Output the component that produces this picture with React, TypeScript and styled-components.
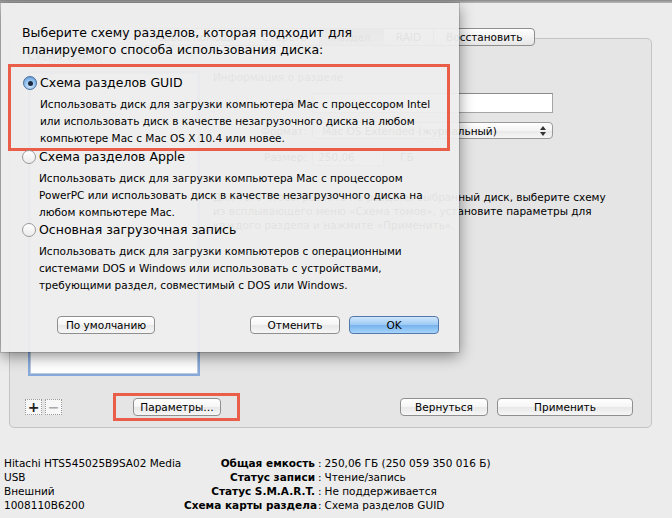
import React from "react";
import styled, { createGlobalStyle, css } from "styled-components";

const UI = `"DejaVu Sans", "Liberation Sans", sans-serif`;

const GlobalStyle = createGlobalStyle`
  * { box-sizing: border-box; }
  html, body { margin: 0; padding: 0; background: #ececec; }
  body { font-family: ${UI}; color: #000; }
`;

const Window = styled.div`
  position: relative;
  width: 672px;
  height: 518px;
  overflow: hidden;
  background: #ececec;
  font-size: 10.5px;
`;

const TitleEdge = styled.div`
  height: 3px;
  background: linear-gradient(#8a8a8a, #b8b8b8);
`;

const Body = styled.div`
  display: flex;
  flex-direction: column;
  padding-top: 25px;
`;

const Tabs = styled.div`
  position: relative;
  z-index: 1;
  display: flex;
  align-self: center;
  height: 18px;
  border: 1px solid #8e8e8e;
  border-radius: 4px;
  overflow: hidden;
  background: linear-gradient(#ffffff, #e6e6e6);
`;

const Tab = styled.div<{ $active?: boolean }>`
  display: flex;
  align-items: center;
  padding: 0 12px;
  white-space: nowrap;
  & + & {
    border-left: 1px solid #a0a0a0;
  }
  ${(p) =>
    p.$active &&
    css`
      background: linear-gradient(#9a9a9a, #bdbdbd);
    `}
`;

const Panel = styled.div`
  display: flex;
  flex-direction: column;
  height: 390px;
  margin: -8px 20px 0 9px;
  padding: 0 18px 7px 15px;
  border: 1px solid #c4c4c4;
  border-radius: 5px;
  background: #e5e5e5;
`;

const TopArea = styled.div`
  flex: 1;
  display: flex;
  min-height: 0;
`;

const LeftCol = styled.div`
  width: 178px;
  display: flex;
  flex-direction: column;
  padding: 10px 0 17px 3px;
`;

const SmallLabel = styled.div`
  line-height: 14px;
`;

const SchemeBox = styled.div`
  flex: 1;
  width: 172px;
  margin-top: 8px;
  background: #fff;
  border: 2px solid #86a9d9;
  box-shadow: inset 0 0 0 1px #b9c9e0;
`;

const RightCol = styled.div`
  flex: 1;
  margin-left: 10px;
  padding-top: 31px;
`;

const Heading = styled.div`
  line-height: 14px;
  color: #222;
`;

const FormGrid = styled.div`
  display: grid;
  grid-template-columns: 94px 241px;
  column-gap: 5px;
  row-gap: 9px;
  margin-top: 9px;
  align-items: center;
`;

const FieldLabel = styled.div`
  text-align: right;
`;

const TextField = styled.div<{ $w?: number; $h?: number }>`
  width: ${(p) => (p.$w ? `${p.$w}px` : "100%")};
  height: ${(p) => p.$h ?? 20}px;
  display: flex;
  align-items: center;
  padding: 0 5px;
  background: #fff;
  border: 1px solid #a5a5a5;
  border-top-color: #8a8a8a;
`;

const SizeRow = styled.div`
  display: flex;
  align-items: center;
  gap: 16px;
`;

const Popup = styled.div<{ $w?: number }>`
  width: ${(p) => (p.$w ? `${p.$w}px` : "100%")};
  height: 17px;
  display: flex;
  align-items: center;
  justify-content: space-between;
  padding: 0 6px 0 9px;
  border: 1px solid #999;
  border-radius: 4px;
  background: linear-gradient(#ffffff 0%, #f4f4f4 50%, #e8e8e8 51%, #f6f6f6 100%);
  white-space: nowrap;
`;

const Paragraph = styled.p`
  margin: 24px 0 0;
  line-height: 14px;
  white-space: nowrap;
`;

const BottomBar = styled.div`
  display: flex;
  align-items: center;
  height: 27px;
`;

const SquareButton = styled.div<{ $disabled?: boolean }>`
  width: 17px;
  height: 16px;
  display: flex;
  align-items: center;
  justify-content: center;
  border: 1px dotted #9a9a9a;
  background: #f7f7f7;
  font-size: 14px;
  font-weight: bold;
  color: ${(p) => (p.$disabled ? "#a8a8a8" : "#222")};
  & + & {
    margin-left: 3px;
  }
`;

const Highlight = styled.div<{ $inset: string }>`
  border: 3px solid #ea5d48;
  padding: ${(p) => p.$inset};
`;

const ParamsWrap = styled(Highlight)`
  margin-left: 51px;
`;

const Spacer = styled.div`
  flex: 1;
`;

const Button = styled.div<{ $w: number; $primary?: boolean }>`
  width: ${(p) => p.$w}px;
  height: 18px;
  display: flex;
  align-items: center;
  justify-content: center;
  border: 1px solid #8f8f8f;
  border-radius: 4px;
  background: linear-gradient(#ffffff 0%, #f5f5f5 50%, #e8e8e8 51%, #f6f6f6 100%);
  white-space: nowrap;
  & + & {
    margin-left: 9px;
  }
  ${(p) =>
    p.$primary &&
    css`
      border-color: #5379ab;
      background: linear-gradient(#cfe6fc 0%, #9cc9f3 50%, #77b2ec 51%, #a6d4fb 100%);
    `}
`;

const Info = styled.div`
  display: grid;
  grid-template-columns: 180px 131px auto 1fr;
  margin-top: 28px;
  padding-left: 4px;
  line-height: 14px;
  white-space: nowrap;
`;

const InfoLabel = styled.div`
  font-weight: bold;
  text-align: right;
`;

const Colon = styled.div`
  padding: 0 3px;
`;

/* sheet */

const Sheet = styled.div`
  position: absolute;
  top: 3px;
  left: 1px;
  z-index: 2;
  width: 458px;
  height: 349px;
  display: flex;
  flex-direction: column;
  padding: 21px 18px 0 21px;
  background: rgba(237, 237, 237, 0.95);
  box-shadow: 0 4px 14px rgba(0, 0, 0, 0.45), 0 0 0 1px rgba(0, 0, 0, 0.15);
`;

const SheetTitle = styled.div`
  font-size: 12.5px;
  line-height: 17px;
  white-space: nowrap;
`;

const OptionFrame = styled(Highlight)`
  margin: 6px -9px 0 -14px;
`;

const Option = styled.div<{ $gap?: number }>`
  margin-top: ${(p) => p.$gap ?? 0}px;
`;

const OptionHead = styled.div`
  display: flex;
  align-items: center;
  gap: 3px;
  font-size: 12.5px;
  line-height: 16px;
`;

const Radio = styled.span<{ $checked?: boolean }>`
  flex: none;
  width: 14px;
  height: 14px;
  display: flex;
  align-items: center;
  justify-content: center;
  border-radius: 50%;
  border: 1px solid ${(p) => (p.$checked ? "#4b6f9c" : "#9a9a9a")};
  background: ${(p) =>
    p.$checked
      ? "radial-gradient(circle at 50% 70%, #d6ebfd 0%, #8dbdec 55%, #4f88cc 100%)"
      : "linear-gradient(#ffffff, #ececec)"};
  &::after {
    content: "";
    display: ${(p) => (p.$checked ? "block" : "none")};
    width: 5px;
    height: 5px;
    border-radius: 50%;
    background: #1b2a40;
  }
`;

const OptionText = styled.p`
  margin: 5px 0 0 17px;
  line-height: 17px;
  white-space: nowrap;
`;

const SheetButtons = styled.div`
  display: flex;
  margin-top: 22px;
  padding: 0 2px 0 35px;
`;

const UpDown = () => (
  <svg width="6" height="10" viewBox="0 0 6 10">
    <path d="M0 4 L3 0 L6 4 Z M0 6 L3 10 L6 6 Z" fill="#333" />
  </svg>
);

export default function App() {
  return (
    <>
      <GlobalStyle />
      <Window>
        <TitleEdge />
        <Body>
          <Tabs>
            <Tab>Первая помощь</Tab>
            <Tab>Стереть</Tab>
            <Tab $active>Раздел</Tab>
            <Tab>RAID</Tab>
            <Tab>Восстановить</Tab>
          </Tabs>
          <Panel>
            <TopArea>
              <LeftCol>
                <SmallLabel>Схема томов:</SmallLabel>
                <SchemeBox />
              </LeftCol>
              <RightCol>
                <Heading>Информация о разделе</Heading>
                <FormGrid>
                  <FieldLabel>Имя:</FieldLabel>
                  <TextField />
                  <FieldLabel>Формат:</FieldLabel>
                  <Popup>
                    Mac OS Extended (журнальный)
                    <UpDown />
                  </Popup>
                  <FieldLabel>Размер:</FieldLabel>
                  <SizeRow>
                    <TextField $w={72} $h={18}>
                      250,06
                    </TextField>
                    ГБ
                  </SizeRow>
                </FormGrid>
                <Paragraph>
                  Для того чтобы разбить на разделы выбранный диск, выберите схему
                  <br />
                  из всплывающего меню «Схема томов», установите параметры для
                  <br />
                  каждого раздела и нажмите «Применить».
                </Paragraph>
              </RightCol>
            </TopArea>
            <BottomBar>
              <SquareButton>+</SquareButton>
              <SquareButton $disabled>−</SquareButton>
              <ParamsWrap $inset="2px 16px 2px 17px">
                <Button $w={88}>Параметры…</Button>
              </ParamsWrap>
              <Spacer />
              <Button $w={88}>Вернуться</Button>
              <Button $w={136}>Применить</Button>
            </BottomBar>
          </Panel>
          <Info>
            <div>Hitachi HTS545025B9SA02 Media</div>
            <InfoLabel>Общая емкость</InfoLabel>
            <Colon>:</Colon>
            <div>250,06 ГБ (250 059 350 016 Б)</div>
            <div>USB</div>
            <InfoLabel>Статус записи</InfoLabel>
            <Colon>:</Colon>
            <div>Чтение/запись</div>
            <div>Внешний</div>
            <InfoLabel>Статус S.M.A.R.T.</InfoLabel>
            <Colon>:</Colon>
            <div>Не поддерживается</div>
            <div>1008110B6200</div>
            <InfoLabel>Схема карты раздела</InfoLabel>
            <Colon>:</Colon>
            <div>Схема разделов GUID</div>
          </Info>
        </Body>

        <Sheet>
          <SheetTitle>
            Выберите схему разделов, которая подходит для
            <br />
            планируемого способа использования диска:
          </SheetTitle>
          <OptionFrame $inset="8px 4px 1px 12px">
            <Option>
              <OptionHead>
                <Radio $checked />
                Схема разделов GUID
              </OptionHead>
              <OptionText>
                Использовать диск для загрузки компьютера Mac с процессором Intel
                <br />
                или использовать диск в качестве незагрузочного диска на любом
                <br />
                компьютере Mac с Mac OS X 10.4 или новее.
              </OptionText>
            </Option>
          </OptionFrame>
          <Option $gap={-2}>
            <OptionHead>
              <Radio />
              Схема разделов Apple
            </OptionHead>
            <OptionText>
              Использовать диск для загрузки компьютера Mac с процессором
              <br />
              PowerPC или использовать диск в качестве незагрузочного диска на
              <br />
              любом компьютере Mac.
            </OptionText>
          </Option>
          <Option $gap={1}>
            <OptionHead>
              <Radio />
              Основная загрузочная запись
            </OptionHead>
            <OptionText>
              Использовать диск для загрузки компьютеров с операционными
              <br />
              системами DOS и Windows или использовать с устройствами,
              <br />
              требующими раздел, совместимый с DOS или Windows.
            </OptionText>
          </Option>
          <SheetButtons>
            <Button $w={98}>По умолчанию</Button>
            <Spacer />
            <Button $w={90}>Отменить</Button>
            <Button $w={90} $primary>
              OK
            </Button>
          </SheetButtons>
        </Sheet>
      </Window>
    </>
  );
}
